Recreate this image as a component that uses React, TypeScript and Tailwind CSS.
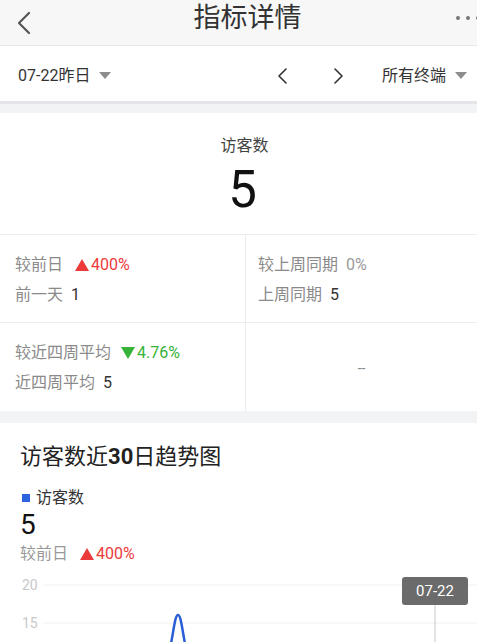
import React from "react";

const font = { fontFamily: "Roboto, 'Noto Sans CJK SC', sans-serif" };

function Caret() {
  return (
    <svg width="12" height="7" viewBox="0 0 12 7" className="ml-[9px]">
      <path d="M0 0 L12 0 L6 7 Z" fill="#8c8c8c" />
    </svg>
  );
}

function Up() {
  return (
    <svg width="14" height="12" viewBox="0 0 14 12" className="mr-[2px]">
      <path d="M7 0 L14 12 L0 12 Z" fill="#ec3a3a" />
    </svg>
  );
}

function Down() {
  return (
    <svg width="14" height="12" viewBox="0 0 14 12" className="mr-[2px]">
      <path d="M0 0 L14 0 L7 12 Z" fill="#36b23a" />
    </svg>
  );
}

export default function App() {
  return (
    <div className="w-[477px] h-[642px] overflow-hidden bg-white text-[#333]" style={font}>
      {/* HEADER */}
      <div className="h-[46px] bg-[#f7f7f7] border-b border-[#e8e8e8] flex items-center">
        <div className="w-[80px] pl-[16px] flex items-center">
          <svg width="16" height="24" viewBox="0 0 16 24">
            <path d="M13 2 L3 12 L13 22" fill="none" stroke="#555" strokeWidth="2.2" strokeLinecap="round" strokeLinejoin="round" />
          </svg>
        </div>
        <div className="flex-1 text-center text-[27px] text-[#333] leading-none -mt-[9px]">指标详情</div>
        <div className="w-[65px] flex justify-end items-center gap-[6px] -mr-[3px] -mt-[10px]">
          <span className="w-[4px] h-[4px] rounded-full bg-[#777]" />
          <span className="w-[4px] h-[4px] rounded-full bg-[#777]" />
          <span className="w-[4px] h-[4px] rounded-full bg-[#777]" />
        </div>
      </div>

      {/* FILTER BAR */}
      <div className="h-[58px] pt-[4px] bg-white flex items-center border-b-[3px] border-[#e4e5e8]">
        <div className="flex items-center pl-[18px] text-[16px] text-[#333]">
          07-22昨日
          <Caret />
        </div>
        <div className="flex-1" />
        <svg width="12" height="16" viewBox="0 0 12 16" className="mr-[43px]">
          <path d="M9 1 L2 8 L9 15" fill="none" stroke="#333" strokeWidth="1.6" strokeLinecap="round" strokeLinejoin="round" />
        </svg>
        <svg width="12" height="16" viewBox="0 0 12 16" className="mr-[38px]">
          <path d="M3 1 L10 8 L3 15" fill="none" stroke="#333" strokeWidth="1.6" strokeLinecap="round" strokeLinejoin="round" />
        </svg>
        <div className="flex items-center pr-[10px] text-[16px] text-[#333]">
          所有终端
          <Caret />
        </div>
      </div>

      <div className="h-[9px] bg-[#f2f3f5]" />

      {/* METRIC CARD */}
      <div className="bg-white">
        <div className="h-[122px] pl-[12px] flex flex-col items-center border-b border-[#ececec]">
          <div className="mt-[22px] text-[16px] text-[#444] leading-[22px]">访客数</div>
          <div className="mt-[5px] -ml-[4px] text-[51px] leading-[56px] text-[#111]">5</div>
        </div>
        <div className="grid grid-cols-[246px_1fr]">
          <div className="h-[88px] border-r border-b border-[#ececec] pl-[15px] pt-[19px] text-[16px]">
            <div className="flex items-center leading-[22px]">
              <span className="text-[#8a8a8a]">较前日</span>
              <span className="ml-[12px] flex items-center text-[#ec3a3a]"><Up />400%</span>
            </div>
            <div className="mt-[8px] leading-[22px]">
              <span className="text-[#8a8a8a]">前一天</span>
              <span className="ml-[8px] text-[#333]">1</span>
            </div>
          </div>
          <div className="h-[88px] border-b border-[#ececec] pl-[12px] pt-[19px] text-[16px]">
            <div className="leading-[22px]">
              <span className="text-[#8a8a8a]">较上周同期</span>
              <span className="ml-[8px] text-[#9a9a9a]">0%</span>
            </div>
            <div className="mt-[8px] leading-[22px]">
              <span className="text-[#8a8a8a]">上周同期</span>
              <span className="ml-[8px] text-[#333]">5</span>
            </div>
          </div>
          <div className="h-[88px] border-r border-[#ececec] pl-[15px] pt-[19px] text-[16px]">
            <div className="flex items-center leading-[22px]">
              <span className="text-[#8a8a8a]">较近四周平均</span>
              <span className="ml-[10px] flex items-center text-[#36b23a]"><Down />4.76%</span>
            </div>
            <div className="mt-[8px] leading-[22px]">
              <span className="text-[#8a8a8a]">近四周平均</span>
              <span className="ml-[8px] text-[#333]">5</span>
            </div>
          </div>
          <div className="h-[88px] flex items-center justify-center text-[14px] text-[#888] pt-[2px]">--</div>
        </div>
      </div>

      <div className="h-[12px] bg-[#f2f3f5]" />

      {/* TREND */}
      <div className="bg-white px-[20px] pt-[19px]">
        <div className="text-[22px] leading-[30px] text-[#222]">
          访客数近<span className="font-bold">30</span>日趋势图
        </div>
        <div className="mt-[15px] flex items-center text-[16px] leading-[22px] text-[#333]">
          <span className="w-[8px] h-[8px] bg-[#2a62e0] ml-[2px] mr-[6px]" />
          访客数
        </div>
        <div className="text-[28px] leading-[32px] text-[#111]">5</div>
        <div className="mt-[2px] flex items-center text-[16px] leading-[22px]">
          <span className="text-[#999]">较前日</span>
          <span className="ml-[12px] flex items-center text-[#ec3a3a]"><Up />400%</span>
        </div>
        <div className="relative mt-[4px] h-[80px] -mx-[20px]">
          <svg width="477" height="80" viewBox="0 0 477 80" className="absolute left-0 top-0">
            <line x1="44" y1="16" x2="477" y2="16" stroke="#f0f0f0" strokeWidth="1" />
            <line x1="44" y1="54" x2="477" y2="54" stroke="#f0f0f0" strokeWidth="1" />
            <text x="22" y="21" fontSize="14" fill="#c8c8c8" fontFamily="Roboto, sans-serif">20</text>
            <text x="22" y="59" fontSize="14" fill="#c8c8c8" fontFamily="Roboto, sans-serif">15</text>
            <line x1="435" y1="30" x2="435" y2="80" stroke="#c8c8c8" strokeWidth="1" />
            <path d="M170 80 C174 60 175 46 178 46 C181 46 182 60 186 80" fill="none" stroke="#2a5fd8" strokeWidth="2.5" />
          </svg>
          <div className="absolute left-[402px] top-[8px] w-[66px] h-[28px] rounded-[3px] bg-[#6b6b6b] text-white text-[15px] flex items-center justify-center">
            07-22
          </div>
        </div>
      </div>
    </div>
  );
}
